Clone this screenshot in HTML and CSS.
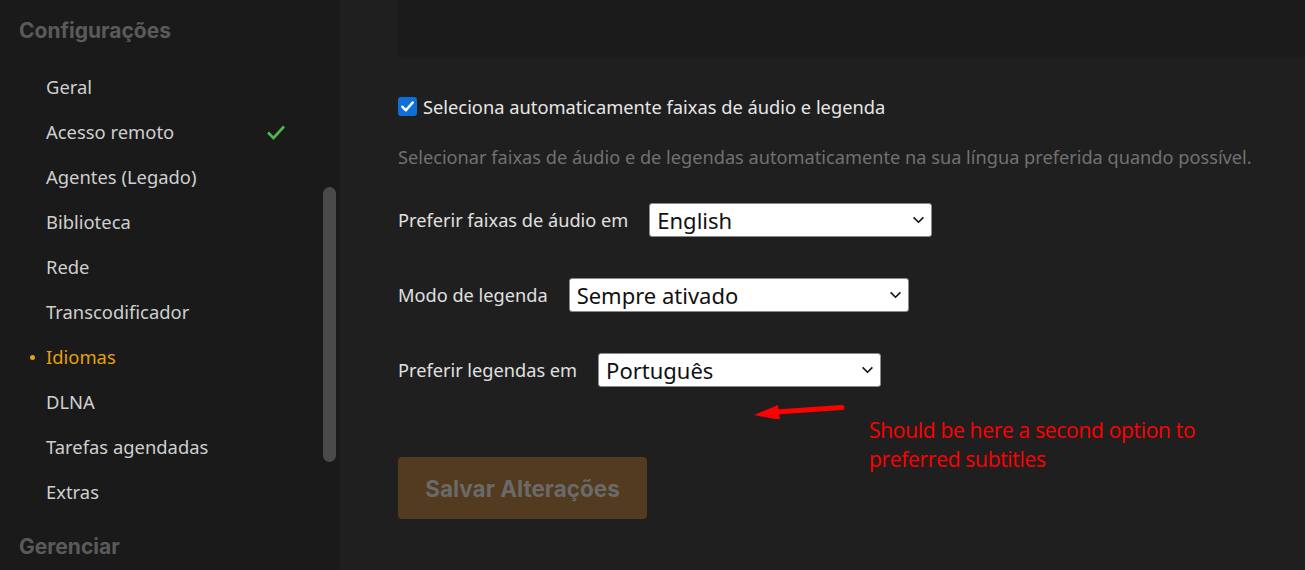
FILE: index.html
```html
<!DOCTYPE html>
<html lang="pt">
<head>
<meta charset="utf-8">
<title>Configurações - Idiomas</title>
<link rel="stylesheet" href="styles.css">
</head>
<body>
<div class="app">
  <aside class="sidebar">
    <h2 class="side-head">Configurações</h2>
    <ul class="nav">
      <li class="nav-item">Geral</li>
      <li class="nav-item">Acesso remoto
        <svg class="ok" viewBox="0 0 20 16" width="20" height="16"><path d="M2 8.5 L7.5 14 L18 2.5" fill="none" stroke="#4cb74c" stroke-width="2.6"/></svg>
      </li>
      <li class="nav-item">Agentes (Legado)</li>
      <li class="nav-item">Biblioteca</li>
      <li class="nav-item">Rede</li>
      <li class="nav-item">Transcodificador</li>
      <li class="nav-item active">Idiomas</li>
      <li class="nav-item">DLNA</li>
      <li class="nav-item">Tarefas agendadas</li>
      <li class="nav-item">Extras</li>
    </ul>
    <h2 class="side-head side-head2">Gerenciar</h2>
    <div class="scrollbar"></div>
  </aside>
  <main class="main">
    <div class="top-panel"></div>
    <label class="check-row">
      <span class="checkbox"><svg viewBox="0 0 20 20" width="19" height="19"><path d="M4.5 10.2 L8.3 14 L15.5 5.8" fill="none" stroke="#fff" stroke-width="2.6" stroke-linecap="round" stroke-linejoin="round"/></svg></span>
      <span>Seleciona automaticamente faixas de áudio e legenda</span>
    </label>
    <p class="desc">Selecionar faixas de áudio e de legendas automaticamente na sua língua preferida quando possível.</p>
    <div class="field">
      <span class="field-label">Preferir faixas de áudio em</span>
      <div class="select s1"><span>English</span><svg class="chev" viewBox="0 0 14 9" width="13" height="8"><path d="M1.5 1.5 L7 7 L12.5 1.5" fill="none" stroke="#111" stroke-width="1.8"/></svg></div>
    </div>
    <div class="field">
      <span class="field-label">Modo de legenda</span>
      <div class="select s2"><span>Sempre ativado</span><svg class="chev" viewBox="0 0 14 9" width="13" height="8"><path d="M1.5 1.5 L7 7 L12.5 1.5" fill="none" stroke="#111" stroke-width="1.8"/></svg></div>
    </div>
    <div class="field">
      <span class="field-label">Preferir legendas em</span>
      <div class="select s3"><span>Português</span><svg class="chev" viewBox="0 0 14 9" width="13" height="8"><path d="M1.5 1.5 L7 7 L12.5 1.5" fill="none" stroke="#111" stroke-width="1.8"/></svg></div>
    </div>
    <button class="save" type="button">Salvar Alterações</button>
    <div class="annotation">
      <svg class="arrow" viewBox="0 0 92 16" width="92" height="16"><path d="M88 4.5 L22 9" stroke="#ff0000" stroke-width="5" stroke-linecap="round"/><path d="M0 12 L24 2 L26 17 Z" fill="#ff0000"/></svg>
      <p class="note">Should be here a second option to<br>preferred subtitles</p>
    </div>
  </main>
</div>
</body>
</html>
```

FILE: styles.css
```css
* { box-sizing: border-box; }
html, body { margin: 0; padding: 0; }
body {
  background: #1f1f1f;
  font-family: "Noto Sans", "Open Sans", sans-serif;
  overflow: hidden;
  height: 570px;
}
.app {
  display: flex;
  height: 570px;
}
.sidebar {
  position: relative;
  width: 340px;
  flex: none;
  background: #1a1a1a;
  padding: 16px 0 0 19px;
}
.side-head {
  margin: 0;
  font-family: "Inter", sans-serif;
  font-weight: 700;
  font-size: 21px;
  line-height: 30px;
  color: #5a5a5a;
}
.side-head2 { margin-top: 18px; }
.nav {
  list-style: none;
  margin: 18px 0 0 0;
  padding: 0;
}
.nav-item {
  position: relative;
  display: flex;
  align-items: center;
  height: 45px;
  padding-left: 27px;
  font-size: 18.4px;
  color: #cfcfcf;
}
.nav-item .ok {
  position: absolute;
  left: 247px;
  top: 15px;
}
.nav-item.active { color: #e5a00d; }
.nav-item.active::before {
  content: "";
  position: absolute;
  left: 11px;
  top: 21px;
  width: 5px;
  height: 5px;
  border-radius: 50%;
  background: #e5a00d;
}
.scrollbar {
  position: absolute;
  left: 323px;
  top: 187px;
  width: 13px;
  height: 275px;
  border-radius: 7px;
  background: #4a4a4a;
}
.main {
  position: relative;
  flex: 1;
  padding-left: 58px;
}
.top-panel {
  height: 58px;
  background: #1b1b1b;
}
.check-row {
  display: flex;
  align-items: center;
  gap: 6px;
  margin-top: 38px;
  height: 20px;
  font-size: 18.3px;
  color: #e6e6e6;
}
.checkbox {
  display: flex;
  width: 19px;
  height: 19px;
  border-radius: 3px;
  background: #0f6fd6;
}
.desc {
  margin: 30px 0 0 0;
  font-size: 18.2px;
  line-height: 22px;
  color: #717171;
}
.field {
  display: flex;
  align-items: center;
  gap: 21px;
  height: 34px;
  margin-top: 35px;
  font-size: 18.2px;
  color: #e0e0e0;
}
.field + .field { margin-top: 41px; }
.select {
  display: flex;
  align-items: center;
  justify-content: space-between;
  height: 34px;
  padding: 0 6px 0 7px;
  background: #fff;
  border: 1px solid #8a8a8a;
  border-radius: 3px;
  font-size: 22px;
  color: #111;
}
.s1 { width: 283px; }
.s2 { width: 340px; }
.s3 { width: 283px; }
.save {
  display: block;
  margin-top: 70px;
  width: 249px;
  height: 62px;
  border: 0;
  border-radius: 4px;
  background: #523b1e;
  color: #6a6a6a;
  font-family: "Inter", sans-serif;
  font-weight: 700;
  font-size: 22.5px;
}
.annotation {
  position: absolute;
  left: 414px;
  top: 403px;
}
.arrow {
  position: absolute;
  left: 0;
  top: 0;
}
.note {
  margin: 13px 0 0 115px;
  font-family: "Open Sans", sans-serif;
  font-size: 21px;
  line-height: 29px;
  color: #ff0000;
  white-space: nowrap;
  letter-spacing: -0.3px;
}
```
